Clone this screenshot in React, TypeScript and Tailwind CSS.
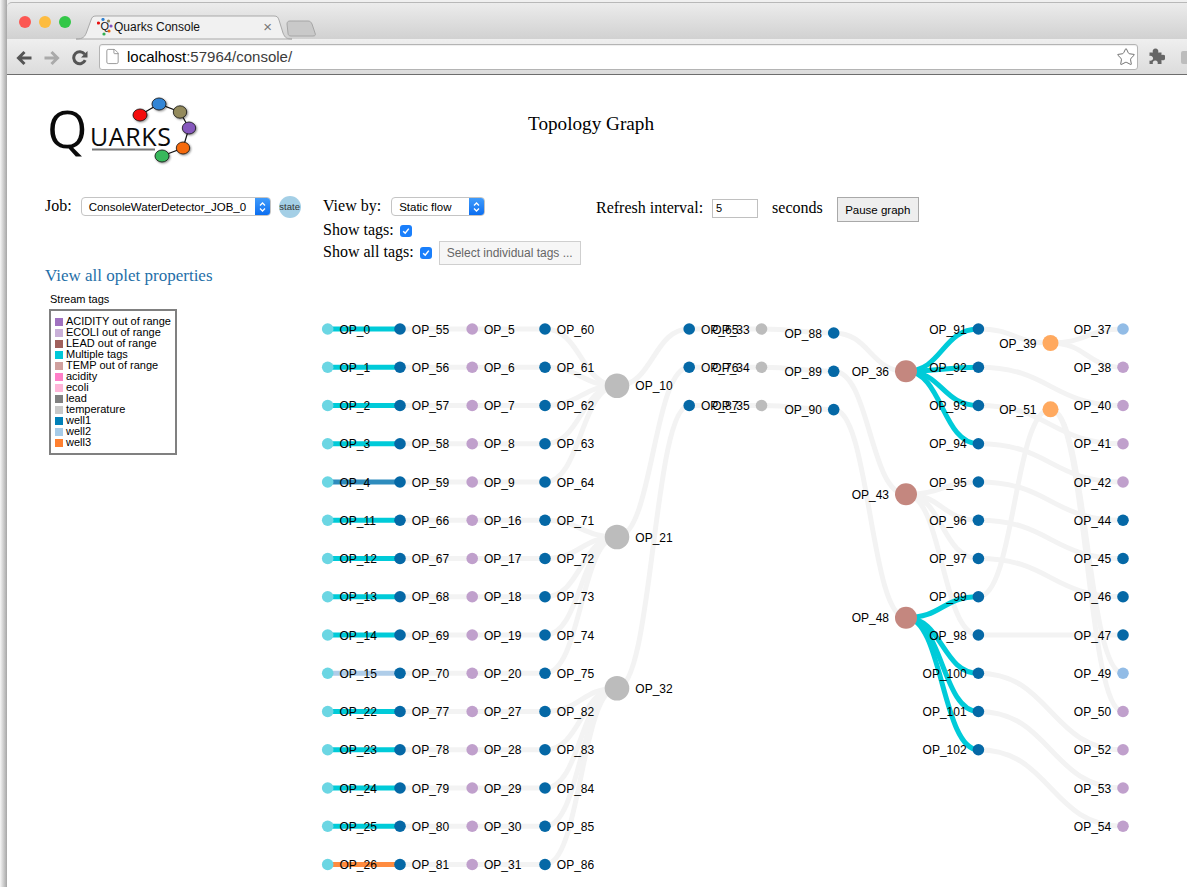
import React from 'react';
import { File, Star } from 'lucide-react';

const CYAN = '#00cbd9';
const LIGHT = '#f3f3f3';
const BLUE = '#0568a6';
const PURPLE = '#c0a0cc';
const GREY = '#bcbcbc';
const ROSE = '#c4877f';
const ORANGE = '#ffa95f';
const SKY = '#92bce6';
const TEAL = '#6bd6e3';

const colX = [327.7, 400, 472.2, 545, 617, 689.2, 761.5, 833.7, 906, 978.4, 1050.5, 1123];
const rowY = (i: number) => 329 + 38.25 * i;

type Node = { id: number; x: number; y: number; r: number; color: string; side: 'left' | 'right' };
type Link = { from: number; to: number; color: string };

const nodes: Record<number, Node> = {};
const add = (id: number, x: number, y: number, r: number, color: string, side: 'left' | 'right') => {
  nodes[id] = { id, x, y, r, color, side };
};

const col0 = [0, 1, 2, 3, 4, 11, 12, 13, 14, 15, 22, 23, 24, 25, 26];
const col1 = [55, 56, 57, 58, 59, 66, 67, 68, 69, 70, 77, 78, 79, 80, 81];
const col2 = [5, 6, 7, 8, 9, 16, 17, 18, 19, 20, 27, 28, 29, 30, 31];
const col3 = [60, 61, 62, 63, 64, 71, 72, 73, 74, 75, 82, 83, 84, 85, 86];
const col9 = [91, 92, 93, 94, 95, 96, 97, 99, 98, 100, 101, 102];
const col11: [number, string][] = [
  [37, SKY], [38, PURPLE], [40, PURPLE], [41, PURPLE], [42, PURPLE], [44, BLUE], [45, BLUE],
  [46, BLUE], [47, BLUE], [49, SKY], [50, PURPLE], [52, PURPLE], [53, PURPLE], [54, PURPLE],
];

col0.forEach((id, i) => add(id, colX[0], rowY(i), 5.8, TEAL, 'right'));
col1.forEach((id, i) => add(id, colX[1], rowY(i), 5.8, BLUE, 'right'));
col2.forEach((id, i) => add(id, colX[2], rowY(i), 5.8, PURPLE, 'right'));
col3.forEach((id, i) => add(id, colX[3], rowY(i), 5.8, BLUE, 'right'));
add(10, colX[4], 385.7, 12.3, GREY, 'right');
add(21, colX[4], 537, 12.3, GREY, 'right');
add(32, colX[4], 688.3, 12.3, GREY, 'right');
[65, 76, 87].forEach((id, i) => add(id, colX[5], rowY(i), 5.8, BLUE, 'right'));
[33, 34, 35].forEach((id, i) => add(id, colX[6], rowY(i), 5.8, GREY, 'left'));
[88, 89, 90].forEach((id, i) => add(id, colX[7], 333 + 38.3 * i, 5.8, BLUE, 'left'));
add(36, colX[8], 371.3, 11, ROSE, 'left');
add(43, colX[8], 494.3, 11, ROSE, 'left');
add(48, colX[8], 617.7, 11, ROSE, 'left');
col9.forEach((id, i) => add(id, colX[9], rowY(i), 5.8, BLUE, 'left'));
add(39, colX[10], 343, 8, ORANGE, 'left');
add(51, colX[10], 409.3, 8, ORANGE, 'left');
col11.forEach(([id, color], i) => add(id, colX[11], rowY(i), 5.8, color, 'left'));

const links: Link[] = [];
col0.forEach((id, i) => {
  const color = id === 4 ? '#2e8cbd' : id === 15 ? '#afcde9' : id === 26 ? '#ff8c40' : CYAN;
  links.push({ from: id, to: col1[i], color });
  links.push({ from: col1[i], to: col2[i], color: LIGHT });
  links.push({ from: col2[i], to: col3[i], color: LIGHT });
  links.push({ from: col3[i], to: i < 5 ? 10 : i < 10 ? 21 : 32, color: LIGHT });
});
const light: [number, number][] = [
  [10, 65], [21, 76], [32, 87], [65, 33], [76, 34], [87, 35], [33, 88], [34, 89], [35, 90],
  [88, 36], [89, 43], [90, 48], [43, 95], [43, 96], [43, 97], [43, 98], [91, 39], [39, 37],
  [39, 38], [92, 40], [93, 41], [94, 42], [95, 44], [96, 45], [97, 46], [98, 47], [99, 51],
  [51, 49], [51, 50], [100, 52], [101, 53], [102, 54],
];
light.forEach(([from, to]) => links.push({ from, to, color: LIGHT }));
const tagged: [number, number][] = [
  [36, 91], [36, 92], [36, 93], [36, 94], [48, 99], [48, 100], [48, 101], [48, 102],
];
tagged.forEach(([from, to]) => links.push({ from, to, color: CYAN }));

const linkPath = (a: Node, b: Node) => {
  const xm = (a.x + b.x) / 2;
  return `M${a.x},${a.y} C${xm},${a.y} ${xm},${b.y} ${b.x},${b.y}`;
};

const legend = [
  ['ACIDITY out of range', 'bg-[#a071c0]'],
  ['ECOLI out of range', 'bg-[#c9b0d8]'],
  ['LEAD out of range', 'bg-[#a0605c]'],
  ['Multiple tags', 'bg-[#00c8d8]'],
  ['TEMP out of range', 'bg-[#d0a09e]'],
  ['acidity', 'bg-[#ff7fc8]'],
  ['ecoli', 'bg-[#ffb5d8]'],
  ['lead', 'bg-[#808080]'],
  ['temperature', 'bg-[#c8c8c8]'],
  ['well1', 'bg-[#0080b8]'],
  ['well2', 'bg-[#a6cbe8]'],
  ['well3', 'bg-[#ff8030]'],
];

const SelectBox = ({ label, className }: { label: string; className: string }) => (
  <div className={`flex h-[19px] items-stretch overflow-hidden rounded-[4px] border border-[#c4c4c4] bg-white ${className}`}>
    <span className="flex-1 truncate pl-[7px] text-[11.5px] leading-[18px] text-black">{label}</span>
    <span className="flex w-[15px] items-center justify-center bg-gradient-to-b from-[#3f9bfb] to-[#0a6ef0]">
      <svg width="7" height="12" viewBox="0 0 7 12" fill="none" stroke="#fff" strokeWidth="1.3">
        <path d="M1 4.5 L3.5 2 L6 4.5 M1 7.5 L3.5 10 L6 7.5" />
      </svg>
    </span>
  </div>
);

const CheckBox = () => (
  <span className="flex h-[12px] w-[12px] items-center justify-center rounded-[3px] bg-[#1a7ffb]">
    <svg width="8" height="8" viewBox="0 0 8 8" fill="none" stroke="#fff" strokeWidth="1.5">
      <path d="M1.2 4.2 L3.2 6.2 L6.8 1.6" />
    </svg>
  </span>
);

const Favicon = () => (
  <svg width="16" height="18" viewBox="0 0 16 18" className="shrink-0">
    <circle cx="1.5" cy="5" r="1.6" fill="#e81010" />
    <circle cx="6" cy="1.5" r="1.6" fill="#2f80d0" />
    <circle cx="11.5" cy="3" r="1.6" fill="#8f8558" />
    <circle cx="14" cy="8" r="1.6" fill="#8050c0" />
    <circle cx="12" cy="13" r="1.6" fill="#f06a10" />
    <circle cx="7" cy="16" r="1.6" fill="#30b050" />
    <text x="3.5" y="11.5" fontSize="11" fill="#111" className="[font-family:'Liberation_Sans',sans-serif]">Q</text>
  </svg>
);

const Logo = () => (
  <svg width="160" height="72" viewBox="-10 0 160 72">
    <defs>
      <filter id="logo-shadow" x="-30%" y="-30%" width="170%" height="170%">
        <feDropShadow dx="1" dy="1" stdDeviation="0.8" floodColor="#000" floodOpacity="0.45" />
      </filter>
    </defs>
    <path d="M91 19 L110 8 L131 16 L140 32 L134 52 L113 60" fill="none" stroke="#111" strokeWidth="1.2" />
    <g stroke="#111" strokeWidth="0.8" filter="url(#logo-shadow)">
      <ellipse cx="91" cy="19" rx="7" ry="6" fill="#f40c10" />
      <ellipse cx="110" cy="8" rx="7" ry="6" fill="#3285d6" />
      <ellipse cx="131" cy="16" rx="6.7" ry="6.2" fill="#938a5c" />
      <ellipse cx="140" cy="32" rx="6.7" ry="6" fill="#8658bd" />
      <ellipse cx="134" cy="52" rx="6.7" ry="6" fill="#f56a0c" />
      <ellipse cx="113" cy="60" rx="7" ry="6" fill="#38b85c" />
    </g>
    <text x="-2" y="51.5" fontSize="52" fontWeight="500" fill="#0a0a0a" className="[font-family:'Open_Sans',sans-serif]">Q</text>
    <text x="41" y="49.5" fontSize="25" textLength="81" fill="#0a0a0a" className="[font-family:'Open_Sans',sans-serif]">UARKS</text>
    <rect x="43" y="52.5" width="63" height="2" fill="#777" />
  </svg>
);

export default function App() {
  return (
    <div className="flex h-[887px] w-[1187px] overflow-hidden bg-white text-black [font-family:'Liberation_Serif',serif]">
      {/* window shadow */}
      <div className="w-[7px] shrink-0 bg-gradient-to-r from-[#f6f6f6] to-[#a6a6a6]" />

      <div className="min-w-0 flex-1">
        {/* browser chrome */}
        <div className="h-[75px] bg-[#f0f0f0] pt-[2px] [font-family:'Liberation_Sans',sans-serif]">
          <div className="relative flex h-[37px] items-center rounded-tl-[5px] border-t border-[#b8b8b8] bg-gradient-to-b from-[#ececec] to-[#d1d1d1] pl-[12px]">
            <div className="flex gap-[8px] pt-[1px]">
              <span className="h-[12px] w-[12px] rounded-full bg-[#fc5753]" />
              <span className="h-[12px] w-[12px] rounded-full bg-[#fdbc40]" />
              <span className="h-[12px] w-[12px] rounded-full bg-[#33c748]" />
            </div>
            <svg width="250" height="37" viewBox="70 2 250 37" className="absolute left-[63px] top-0">
              <path d="M76 38 C83 38 85 36 87 30 L91 19 C92 16 93 15 96 15 L274 15 C277 15 278 16 279 19 L283 32 C285 37 287 38 292 38 Z" fill="#f1f1f1" stroke="#a9a9a9" />
              <path d="M287 23 C287 21 288 20 290 20 L308 20 C310 20 311 21 312 23 L315 32 C316 34 315 35 313 35 L291 35 C289 35 288 34 288 32 Z" fill="#c9c9c9" stroke="#a6a6a6" />
            </svg>
            <div className="relative ml-[26px] mt-[11px] flex w-[175px] items-center">
              <Favicon />
              <span className="ml-[1px] text-[12px] text-[#111]">Quarks Console</span>
              <span className="ml-auto text-[15px] leading-none text-[#777]">×</span>
            </div>
          </div>
          <div className="flex h-[36px] items-center overflow-hidden border-b border-[#6d6d6d] bg-gradient-to-b from-[#efefef] to-[#dcdcdc] pl-[9px]">
            <svg width="16" height="16" viewBox="0 0 16 16" fill="none" stroke="#555" strokeWidth="3" className="mt-[2px] shrink-0">
              <path d="M15.5 8 H2.5 M8.5 2 L2.5 8 L8.5 14" />
            </svg>
            <svg width="16" height="16" viewBox="0 0 16 16" fill="none" stroke="#aaa" strokeWidth="3" className="ml-[12px] mt-[2px] shrink-0">
              <path d="M0.5 8 H13.5 M7.5 2 L13.5 8 L7.5 14" />
            </svg>
            <svg width="16" height="16" viewBox="0 0 16 16" fill="none" className="ml-[12px] mt-[2px] shrink-0">
              <path d="M13.2 10.2 A6 6 0 1 1 12.6 4.2" stroke="#555" strokeWidth="3" />
              <path d="M15.5 1 V7.6 H9 Z" fill="#555" />
            </svg>
            <div className="ml-[11px] flex h-[26px] w-[1039px] shrink-0 items-center rounded-[3px] border border-[#b4b4b4] bg-white pl-[4px] pr-[1px] shadow-[inset_0_1px_1px_#eee]">
              <File size={17} stroke="#8a8a8a" strokeWidth={1.2} className="shrink-0" />
              <span className="ml-[6px] pt-[2px] text-[15px] text-[#3c3c3c]">
                <span className="text-black">localhost</span>:57964/console/
              </span>
              <Star size={20} stroke="#666" strokeWidth={1.1} className="ml-auto" />
            </div>
            <svg width="17" height="18" viewBox="0 0 17 18" className="ml-[10px] mt-[1px] shrink-0" fill="#666">
              <path d="M1.5 4.5 H5 A2.8 2.8 0 1 1 10 4.5 H13.5 V7 A2.8 2.8 0 1 1 13.5 12 V16 H9.5 A2.5 2.5 0 1 0 5 16 H1.5 V12.5 A2.5 2.5 0 1 0 1.5 8 Z" />
            </svg>
            <span className="ml-[16px] mt-[1px] h-[13px] w-[8px] shrink-0 rounded-l-[2px] bg-[#bdbdbd]" />
          </div>
        </div>

        {/* header */}
        <div className="relative h-[120px] pl-[32px] pt-[21px]">
          <Logo />
          <h3 className="absolute left-[521px] top-[38px] text-[19.2px] leading-[22px]">Topology Graph</h3>
        </div>

        <div className="flex">
          {/* left panel */}
          <div className="w-[305px] shrink-0 pl-[38px]">
            <div className="flex h-[23px] items-center">
              <span className="-mt-[2px] text-[16px]">Job:</span>
              <SelectBox label="ConsoleWaterDetector_JOB_0" className="ml-[9px] w-[190px] [font-family:'Liberation_Sans',sans-serif]" />
              <span className="ml-[8px] mt-[1px] flex h-[22px] w-[22px] items-center justify-center rounded-full bg-[#a4cfe6] text-[9.5px] text-[#333] [font-family:'Liberation_Sans',sans-serif]">
                state
              </span>
            </div>
            <a className="mt-[49px] block whitespace-nowrap text-[17px] leading-[18px] text-[#1f6fa8]">View all oplet properties</a>
            <div className="mt-[8px] pl-[5px] text-[11px] leading-[13px] [font-family:'Liberation_Sans',sans-serif]">
              Stream tags
            </div>
            <div className="ml-[4px] mt-[3px] h-[146px] w-[128px] border-2 border-[#808080] pl-[4px] pt-[5px] [font-family:'Liberation_Sans',sans-serif]">
              {legend.map(([label, swatch]) => (
                <div key={label} className="flex h-[11px] items-center text-[11px] leading-[11px]">
                  <span className={`h-[8px] w-[8px] shrink-0 ${swatch}`} />
                  <span className="ml-[3px] whitespace-nowrap">{label}</span>
                </div>
              ))}
            </div>
          </div>

          {/* right panel */}
          <div className="min-w-0 flex-1">
            <div className="flex h-[115px] pl-[11px] text-[16px] leading-[18px]">
              <div className="w-[273px]">
                <div className="mb-[2px] flex h-[23px] items-center">
                  <span className="-mt-[2px]">View by:</span>
                  <SelectBox label="Static flow" className="ml-[10px] w-[94px] [font-family:'Liberation_Sans',sans-serif]" />
                </div>
                <div className="flex h-[21px] items-center">
                  <span className="-mt-[2px]">Show tags:</span>
                  <span className="ml-[6px]"><CheckBox /></span>
                </div>
                <div className="flex h-[24px] items-center">
                  <span className="-mt-[2px]">Show all tags:</span>
                  <span className="ml-[6px]"><CheckBox /></span>
                  <button className="ml-[7px] h-[24px] w-[142px] border border-[#cfcfcf] bg-[#f6f6f6] text-[12px] text-[#666] [font-family:'Liberation_Sans',sans-serif]">
                    Select individual tags ...
                  </button>
                </div>
              </div>
              <div className="flex h-[28px] items-start">
                <span className="mt-[4px]">Refresh interval:</span>
                <div className="ml-[9px] mt-[4px] h-[19px] w-[46px] border border-[#c0c0c0] pl-[3px] text-[11px] leading-[17px] [font-family:'Liberation_Sans',sans-serif]">
                  5
                </div>
                <span className="ml-[14px] mt-[4px]">seconds</span>
                <button className="ml-[14px] mt-[2px] h-[25px] w-[82px] border border-[#a9a9a9] bg-[#eeeeee] text-[11.5px] [font-family:'Liberation_Sans',sans-serif]">
                  Pause graph
                </button>
              </div>
            </div>

            {/* topology graph */}
            <svg width="875" height="577" viewBox="312 310 875 577" className="block [font-family:'Liberation_Sans',sans-serif]">
              <g fill="none" strokeWidth="5">
                {links.filter(l => l.color === LIGHT).map(l => (
                  <path key={`${l.from}-${l.to}`} d={linkPath(nodes[l.from], nodes[l.to])} stroke={l.color} />
                ))}
                {links.filter(l => l.color !== LIGHT).map(l => (
                  <path key={`${l.from}-${l.to}`} d={linkPath(nodes[l.from], nodes[l.to])} stroke={l.color} />
                ))}
              </g>
              {Object.values(nodes).map(n => (
                <circle key={n.id} cx={n.x} cy={n.y} r={n.r} fill={n.color} />
              ))}
              {Object.values(nodes).map(n => (
                <text
                  key={n.id}
                  x={n.side === 'right' ? n.x + n.r + 6 : n.x - n.r - 6}
                  y={n.y + 4.5}
                  fontSize="12"
                  fill="#000"
                  textAnchor={n.side === 'right' ? 'start' : 'end'}
                >
                  OP_{n.id}
                </text>
              ))}
            </svg>
          </div>
        </div>
      </div>
    </div>
  );
}
